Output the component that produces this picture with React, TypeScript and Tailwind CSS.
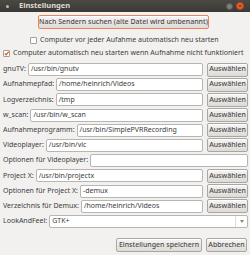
import React from "react";

const font = { fontFamily: '"Noto Sans", "DejaVu Sans", sans-serif' };

function Btn({ children, className = "" }: { children: React.ReactNode; className?: string }) {
  return (
    <div
      className={
        "flex items-center justify-center h-[14px] rounded-[2px] border border-[#a9a7a2] bg-gradient-to-b from-[#f6f5f4] to-[#dedbd6] text-[7px] text-[#4a4a4a] font-medium whitespace-nowrap shadow-[inset_0_1px_0_#ffffff] " +
        className
      }
    >
      {children}
    </div>
  );
}

function Row({ label, value, pick = true }: { label: string; value: string; pick?: boolean }) {
  return (
    <div className="flex items-center h-[13px] gap-[2px]">
      <span className="text-[7px] text-[#3c3c3c] whitespace-nowrap pl-[1px]">{label}</span>
      <div className="flex-1 h-[13px] flex items-center bg-white border border-[#b8b6b2] rounded-[2px] px-[2px] text-[7px] text-[#3c3c3c] whitespace-nowrap overflow-hidden">
        {value}
      </div>
      {pick && <Btn className="w-[41px] ml-[2px]">Auswählen</Btn>}
    </div>
  );
}

export default function App() {
  return (
    <div className="w-[250px] h-[255px] bg-[#f2f1f0] flex flex-col overflow-hidden" style={font}>
      {/* title bar */}
      <div className="h-[12px] flex items-center bg-gradient-to-b from-[#4a4944] to-[#3a3935] px-[6px]">
        <div className="w-[3px] h-[3px] rounded-full bg-[#bdbab3]" />
        <span className="ml-[10px] text-[7.5px] font-bold text-[#dfdbd2]">Einstellungen</span>
        <div className="ml-auto flex items-center gap-[3px]">
          <div className="w-[7px] h-[7px] rounded-full bg-[#7e7d78] border border-[#5a5954]" />
          <div className="w-[8px] h-[8px] rounded-full bg-[#e8602c] border border-[#b5451c] flex items-center justify-center text-[6px] leading-none text-[#3c1a0c]">×</div>
        </div>
      </div>

      <div className="flex flex-col px-[2px] pt-[3px]">
        <div className="flex justify-center">
          <Btn className="w-[171px] h-[14px] border-[#e8855a] ml-[-3px]">Nach Sendern suchen (alte Datei wird umbenannt)</Btn>
        </div>

        <div className="flex items-center mt-[7px] ml-[28px] gap-[3px] h-[8px]">
          <div className="w-[7px] h-[7px] border border-[#a19f9a] rounded-[1px] bg-white" />
          <span className="text-[7px] text-[#3c3c3c] whitespace-nowrap">Computer vor jeder Aufahme automatisch neu starten</span>
        </div>

        <div className="flex items-center mt-[5px] ml-[1px] gap-[3px] h-[8px]">
          <div className="w-[7px] h-[7px] border border-[#a19f9a] rounded-[1px] bg-white flex items-center justify-center">
            <svg width="7" height="7" viewBox="0 0 7 7">
              <path d="M1 3.5 L3 5.5 L6.5 1" stroke="#e2571e" strokeWidth="1.6" fill="none" />
            </svg>
          </div>
          <span className="text-[7px] text-[#3c3c3c] whitespace-nowrap">Computer automatisch neu starten wenn Aufnahme nicht funktioniert</span>
        </div>

        <div className="flex flex-col gap-[2.2px] mt-[6px]">
          <Row label="gnuTV:" value="/usr/bin/gnutv" />
          <Row label="Aufnahmepfad:" value="/home/heinrich/Videos" />
          <Row label="Logverzeichnis:" value="/tmp" />
          <Row label="w_scan:" value="/usr/bin/w_scan" />
          <Row label="Aufnahmeprogramm:" value="/usr/bin/SimplePVRRecording" />
          <Row label="Videoplayer:" value="/usr/bin/vlc" />
          <Row label="Optionen für Videoplayer:" value="" pick={false} />
          <Row label="Project X:" value="/usr/bin/projectx" />
          <Row label="Optionen für Project X:" value="-demux" />
          <Row label="Verzeichnis für Demux:" value="/home/heinrich/Videos" />
          <div className="flex items-center h-[13px] gap-[2px]">
            <span className="text-[7px] text-[#3c3c3c] whitespace-nowrap pl-[1px]">LookAndFeel:</span>
            <div className="flex-1 h-[13px] flex items-center bg-white border border-[#b8b6b2] rounded-[2px] text-[7px] text-[#3c3c3c]">
              <span className="px-[2px] flex-1">GTK+</span>
              <div className="w-[12px] h-full border-l border-[#e0dedb] flex items-center justify-center">
                <svg width="4" height="3" viewBox="0 0 4 3">
                  <path d="M0 0 L4 0 L2 3 Z" fill="#8a8884" />
                </svg>
              </div>
            </div>
          </div>
        </div>

        <div className="flex justify-end gap-[4px] mt-[10px] pr-[1px]">
          <Btn className="w-[86px]">Einstellungen speichern</Btn>
          <Btn className="w-[41px]">Abbrechen</Btn>
        </div>
      </div>
    </div>
  );
}
